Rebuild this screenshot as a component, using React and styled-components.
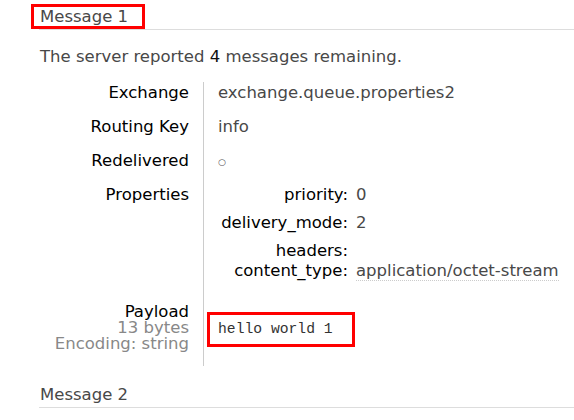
import styled, { createGlobalStyle } from "styled-components";

const GlobalStyle = createGlobalStyle`
  html, body {
    margin: 0;
    padding: 0;
    background: #fff;
  }
  body {
    font-family: "DejaVu Sans", Verdana, sans-serif;
    font-size: 16.5px;
    color: #484848;
  }
`;

const Page = styled.div`
  width: 574px;
  height: 420px;
  overflow: hidden;
  padding-left: 39px;
  box-sizing: border-box;
`;

const Heading = styled.h2`
  position: relative;
  margin: ${(p) => (p.$first ? "0" : "12px 0 0")};
  padding: 8px 0 3px 1px;
  font-size: 16.5px;
  line-height: 18px;
  font-weight: normal;
  color: #484848;
  border-bottom: 1px solid #ddd;
`;

const Highlight = styled.span`
  position: absolute;
  left: -8px;
  top: 4px;
  width: 114px;
  height: 25px;
  border: 3px solid #f00;
  box-sizing: border-box;
`;

const Summary = styled.p`
  margin: 18px 0 16px 1px;
  line-height: 18px;
  color: #484848;

  b {
    font-weight: normal;
    color: #111;
  }
`;

const Details = styled.div`
  display: grid;
  grid-template-columns: 165px auto;
  line-height: 18px;
`;

const Label = styled.div`
  text-align: right;
  padding: 2px 14px 14px 0;
  border-right: 1px solid #ccc;
  color: #000;
  line-height: ${(p) => p.$lh || 18}px;
`;

const Value = styled.div`
  padding: ${(p) => p.$top || 2}px 0 ${(p) => p.$bottom || 0}px 14px;
  color: #484848;
`;

const Sub = styled.div`
  color: #888;
`;

const Circle = styled.span`
  font-size: 9px;
  color: #555;
  vertical-align: 1px;
`;

const Props = styled.div`
  display: grid;
  grid-template-columns: 130px auto;
  column-gap: 8px;
`;

const PropKey = styled.div`
  text-align: right;
  color: #000;
  padding-bottom: ${(p) => p.$gap ?? 10}px;
`;

const PropVal = styled.div`
  color: #484848;
`;

const Abbr = styled.span`
  border-bottom: 1px dotted #ccc;
`;

const PayloadBox = styled.pre`
  display: inline-block;
  margin: 0 0 0 -11px;
  padding: 5px 19px 5px 8px;
  border: 3px solid #f00;
  font-family: "Liberation Mono", "DejaVu Sans Mono", monospace;
  font-size: 14.7px;
  line-height: 19px;
  color: #333;
`;

export default function App() {
  return (
    <Page>
      <GlobalStyle />
      <Heading $first>
        <Highlight />
        Message 1
      </Heading>
      <Summary>
        The server reported <b>4</b> messages remaining.
      </Summary>
      <Details>
        <Label>Exchange</Label>
        <Value>exchange.queue.properties2</Value>
        <Label>Routing Key</Label>
        <Value>info</Value>
        <Label>Redelivered</Label>
        <Value>
          <Circle>○</Circle>
        </Value>
        <Label>Properties</Label>
        <Value $bottom={22}>
          <Props>
            <PropKey>priority:</PropKey>
            <PropVal>0</PropVal>
            <PropKey>delivery_mode:</PropKey>
            <PropVal>2</PropVal>
            <PropKey $gap={2}>headers:</PropKey>
            <PropVal />
            <PropKey $gap={0}>content_type:</PropKey>
            <PropVal>
              <Abbr>application/octet-stream</Abbr>
            </PropVal>
          </Props>
        </Value>
        <Label $lh={16}>
          Payload
          <Sub>13 bytes</Sub>
          <Sub>Encoding: string</Sub>
        </Label>
        <Value $top={10}>
          <PayloadBox>hello world 1</PayloadBox>
        </Value>
      </Details>
      <Heading>Message 2</Heading>
    </Page>
  );
}
